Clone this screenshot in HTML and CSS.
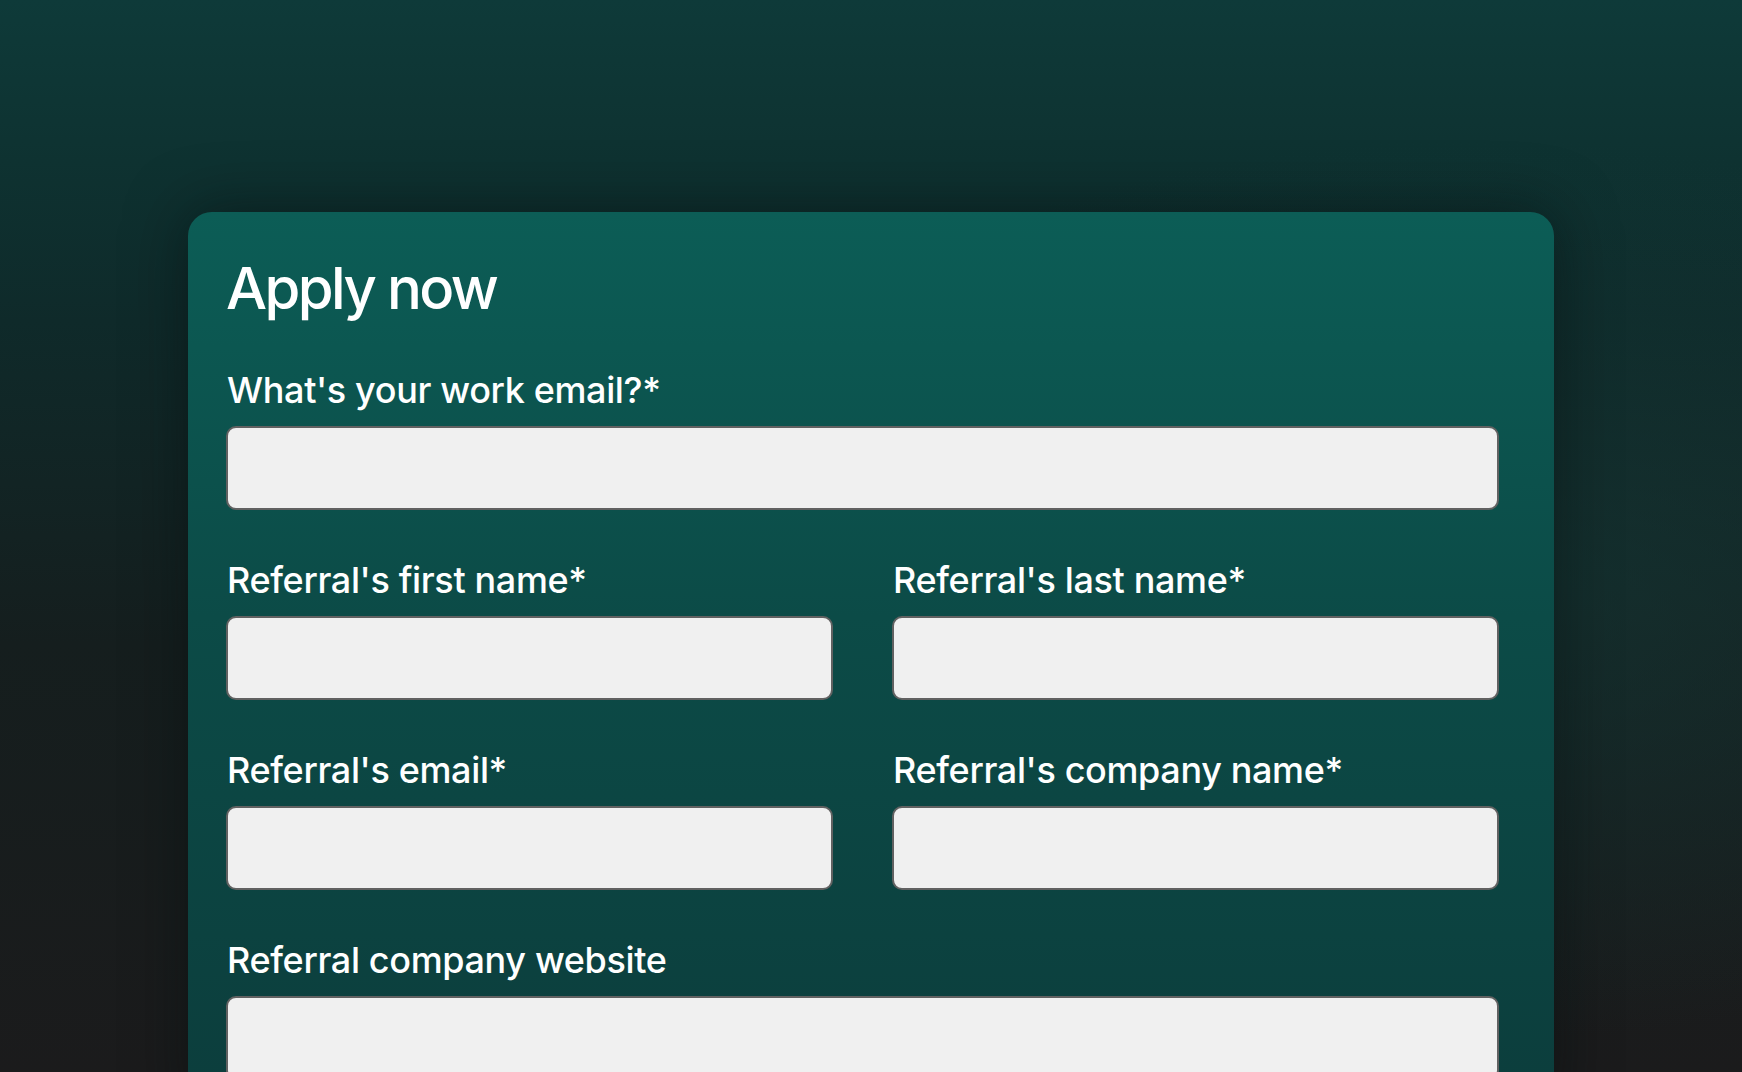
FILE: index.html
```
<!doctype html>
<html>
<head>
    <meta charset="utf-8">
    <title>Apply now</title>
    <link rel="stylesheet" href="styles.css">
</head>

<body>

<div class="page">
    <form class="apply-card">
        <h1 class="apply-title">Apply now</h1>

        <div class="field">
            <label class="field-label" for="work-email">What's your work email?*</label>
            <input class="field-input" id="work-email" type="email">
        </div>

        <div class="field-row">
            <div class="field">
                <label class="field-label" for="ref-first">Referral's first name*</label>
                <input class="field-input" id="ref-first" type="text">
            </div>
            <div class="field">
                <label class="field-label" for="ref-last">Referral's last name*</label>
                <input class="field-input" id="ref-last" type="text">
            </div>
        </div>

        <div class="field-row">
            <div class="field">
                <label class="field-label" for="ref-email">Referral's email*</label>
                <input class="field-input" id="ref-email" type="email">
            </div>
            <div class="field">
                <label class="field-label" for="ref-company">Referral's company name*</label>
                <input class="field-input" id="ref-company" type="text">
            </div>
        </div>

        <div class="field">
            <label class="field-label" for="ref-site">Referral company website</label>
            <input class="field-input" id="ref-site" type="url">
        </div>
    </form>
</div>

</body>
</html>
```

FILE: styles.css
```
html, body {
    margin: 0;
    height: 100%;
}

body {
    font-family: Inter, "Noto Sans", sans-serif;
    color: #fff;
    overflow: hidden;
    background:
        radial-gradient(ellipse 70% 60% at 85% 55%, rgba(20, 58, 56, 0.6), rgba(20, 58, 56, 0) 70%),
        linear-gradient(180deg, #0e3a39 0%, #0e3231 15%, #0f2a2a 30%, #151e1e 60%, #1b1b1c 100%);
}

.page {
    padding: 212px 188px 0;
}

.apply-card {
    box-sizing: border-box;
    width: 1366px;
    min-height: 900px;
    padding: 47px 55px 0 38px;
    border-radius: 24px 24px 0 0;
    background: linear-gradient(180deg, #0c5d56 0%, #0c4b47 45%, #0c3d3c 100%);
    box-shadow: 0 0 60px rgba(5, 15, 15, 0.55);
    display: flex;
    flex-direction: column;
    gap: 48px;
}

.apply-title {
    margin: 0 0 3px;
    font-size: 58px;
    line-height: 58px;
    font-weight: 500;
    letter-spacing: -0.045em;
}

.field-row {
    display: grid;
    grid-template-columns: 1fr 1fr;
    column-gap: 59px;
}

.field {
    display: flex;
    flex-direction: column;
    gap: 14px;
}

.field-label {
    padding-left: 1px;
    font-size: 36px;
    line-height: 44px;
    font-weight: 500;
    letter-spacing: -0.01em;
}

.field-input {
    box-sizing: border-box;
    height: 84px;
    width: 100%;
    margin: 0;
    border: 2px solid #616161;
    border-radius: 10px;
    background: #f0f0f0;
    font: inherit;
}
```
